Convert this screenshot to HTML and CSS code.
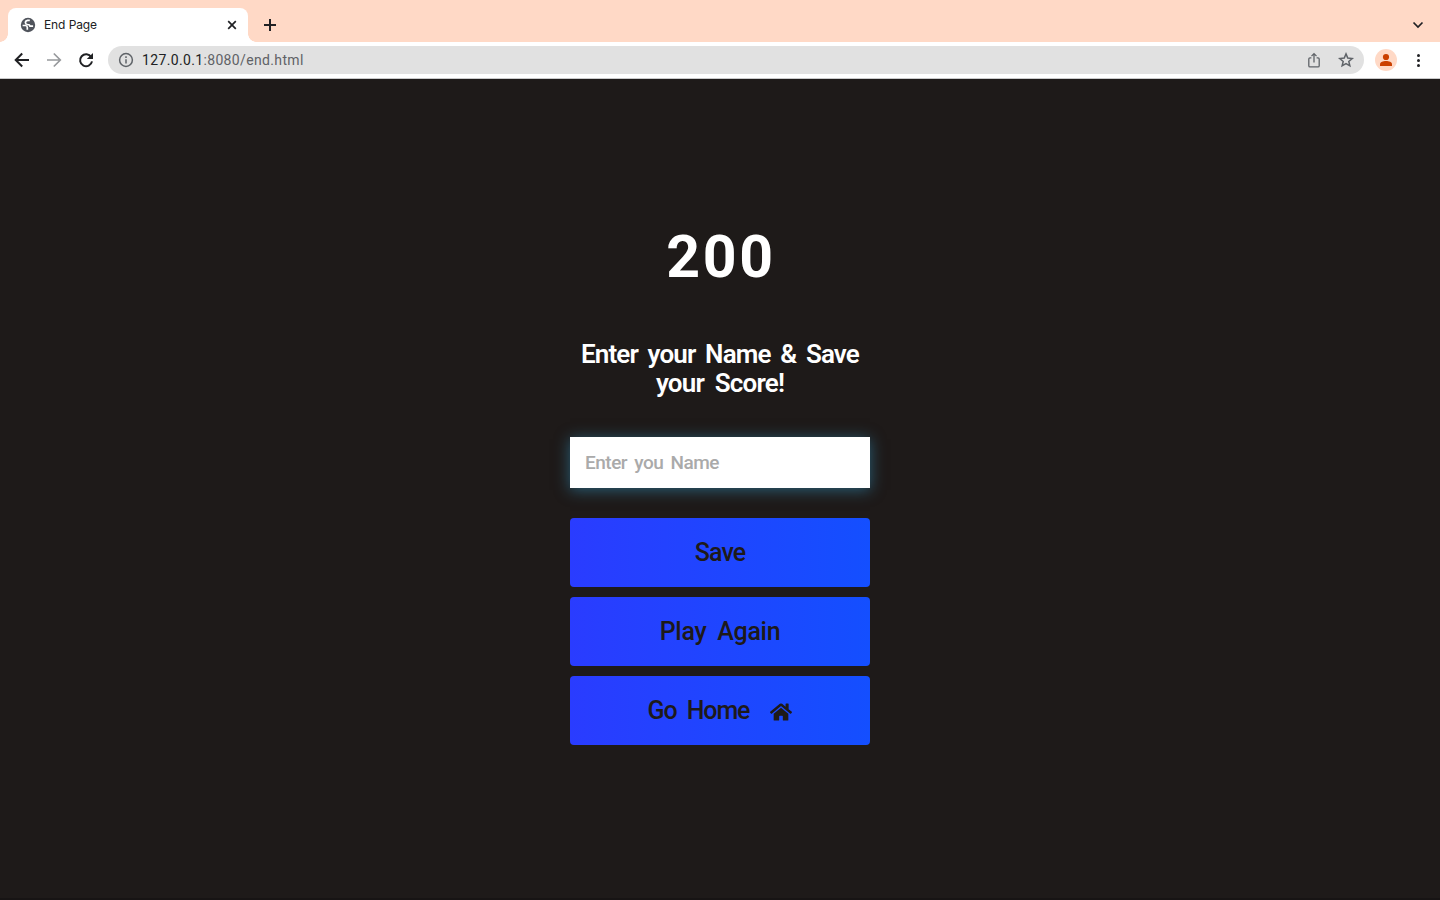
FILE: index.html
```html
<!DOCTYPE html>
<html lang="en">
<head>
<meta charset="utf-8">
<title>End Page</title>
<link rel="stylesheet" href="styles.css">
</head>
<body>
<header class="browser">
  <div class="tabs">
    <div class="tab">
      <svg class="globe" viewBox="0 0 16 16"><circle cx="8" cy="8" r="7.200" fill="#50545c"/><path d="M9.800 3.300H7.600Q5.400 3.700 5.400 5.700 5.500 7.300 7.500 7.500 9.800 7.500 10 9.200H13.100M2.600 8.500H5.300Q7.200 8.600 7.300 10.200V12.800" fill="none" stroke="#fff" stroke-width="1.700"/></svg>
      <span class="tab-title">End Page</span>
      <svg class="close" viewBox="0 0 10 10"><path d="M1.200 1.200l7.600 7.600M8.800 1.200L1.200 8.800" class="stroke"/></svg>
    </div>
    <svg class="plus" viewBox="0 0 12 12"><path d="M6 0v12M0 6h12" class="stroke thick"/></svg>
    <svg class="chevron" viewBox="0 0 12 8"><path d="M1.500 1.500L6 6l4.500-4.500" class="stroke"/></svg>
  </div>
  <div class="toolbar">
    <svg class="nav" viewBox="0 0 16 16"><path d="M15 8H2M8.200 1.500L1.700 8l6.500 6.500" class="stroke thick"/></svg>
    <svg class="nav muted" viewBox="0 0 16 16"><path d="M1 8h13M7.800 1.500L14.300 8l-6.500 6.500" class="stroke"/></svg>
    <svg class="nav" viewBox="0 0 16 16"><path d="M13.200 5.100A6 6 0 1 0 14 9.400" class="stroke thick"/><path d="M15 .9v6.200H8.800z" fill="#202124"/></svg>
    <div class="address">
      <svg class="info" viewBox="0 0 16 16"><circle cx="8" cy="8" r="6.400" class="line"/><path d="M8 7.200v4.300M8 4.300v1.600" class="line"/></svg>
      <span class="url"><b>127.0.0.1</b>:8080/end.html</span>
      <svg class="share" viewBox="0 0 16 16"><path d="M5.400 5.800H4q-1.200 0-1.200 1.200v6.700q0 1.200 1.200 1.200h8q1.200 0 1.200-1.200V7q0-1.200-1.200-1.200h-1.400M8 10.500V1.600M5.500 4.100L8 1.600l2.500 2.500" class="line thin"/></svg>
      <svg class="star" viewBox="0 0 16 16"><path d="M8 1.900l1.750 4.200 4.450.4-3.400 2.900 1.050 4.400L8 11.500l-3.850 2.300L5.200 9.400 1.800 6.500l4.450-.4z" class="line"/></svg>
    </div>
    <div class="avatar"><svg viewBox="0 0 22 22"><circle cx="11" cy="8" r="3.100"/><path d="M5 17v-1.800c0-2 3-3.200 6-3.200s6 1.200 6 3.200V17z"/></svg></div>
    <div class="menu"><i></i><i></i><i></i></div>
  </div>
</header>
<main class="page">
  <div class="content">
    <h1 class="score">200</h1>
    <form class="form">
      <h2 class="prompt"><span class="line-one">Enter your Name &amp; Save</span><br><span class="line-two">your Score!</span></h2>
      <input class="name" type="text" placeholder="Enter you Name">
      <button class="btn" type="button"><span class="save">Save</span></button>
    </form>
    <a class="btn"><span class="again">Play Again</span></a>
    <a class="btn"><span class="go">Go Home</span><svg class="home" viewBox="0 0 576 512"><path d="M280.370 148.260L96 300.110V464a16 16 0 0 0 16 16l112.060-.29a16 16 0 0 0 15.920-16V368a16 16 0 0 1 16-16h64a16 16 0 0 1 16 16v95.640a16 16 0 0 0 16 16.050L464 480a16 16 0 0 0 16-16V300L295.670 148.260a12.190 12.190 0 0 0-15.300 0zM571.600 251.470L488 182.560V44.050a12 12 0 0 0-12-12h-56a12 12 0 0 0-12 12v72.610L318.470 43a48 48 0 0 0-61 0L4.340 251.470a12 12 0 0 0-1.600 16.900l25.500 31A12 12 0 0 0 45.150 301l235.220-193.740a12.190 12.190 0 0 1 15.300 0L530.900 301a12 12 0 0 0 16.900-1.600l25.500-31a12 12 0 0 0-1.700-16.930z"/></svg></a>
  </div>
</main>
</body>
</html>
```
FILE: styles.css
```css
* { box-sizing: border-box; }
body { margin: 0; height: 900px; overflow: hidden; display: flex; flex-direction: column; background: #1e1a19; font-family: Roboto, sans-serif; }
svg { display: block; flex: none; overflow: visible; }
.stroke { fill: none; stroke: #202124; stroke-width: 1.7; }
.stroke.thick { stroke-width: 2; }
.muted .stroke { stroke: #97999c; }
.line { fill: none; stroke: #5f6368; stroke-width: 1.5; }
.line.thin { stroke-width: 1.3; }
.browser { height: 79px; flex: none; background: #fff; border-bottom: 1px solid #c9c9ca; }
.tabs { height: 42px; display: flex; align-items: flex-end; padding-left: 8px; background: #ffd9c6; }
.tab { position: relative; width: 240px; height: 34px; display: flex; align-items: center; padding: 0 11px 0 12px; border-radius: 8px 8px 0 0; background: #fff; }
.tab::before, .tab::after { content: ""; position: absolute; bottom: 0; width: 8px; height: 8px; }
.tab::before { left: -8px; background: radial-gradient(circle at 0 0, transparent 7.5px, #fff 8px); }
.tab::after { right: -8px; background: radial-gradient(circle at 100% 0, transparent 7.5px, #fff 8px); }
.globe { width: 16px; height: 16px; }
.tab-title { flex: 1; margin-left: 8px; padding-bottom: 2px; font: 12px Inter, sans-serif; letter-spacing: -.1px; color: #202124; }
.close { width: 10px; height: 10px; }
.plus { width: 12px; height: 12px; margin: 0 0 11px 16px; }
.chevron { width: 12px; height: 8px; margin: 0 16px 13px auto; }
.toolbar { height: 36px; display: flex; align-items: center; padding: 0 15px 0 14px; }
.nav { width: 16px; height: 16px; margin-right: 16px; }
.nav + .nav + .nav { margin-right: 14px; }
.address { flex: 1; height: 28px; display: flex; align-items: center; padding: 0 10px; border-radius: 14px; background: #e1e1e1; }
.info { width: 16px; height: 16px; }
.url { flex: 1; margin-left: 8px; font-size: 14px; letter-spacing: .35px; color: #606266; }
.url b { font-weight: 400; color: #202124; }
.share { width: 16px; height: 16px; margin-right: 16px; }
.star { width: 16px; height: 16px; }
.avatar { width: 22px; height: 22px; margin-left: 11px; border-radius: 50%; background: #ffd9c6; fill: #cb4000; }
.menu { width: 13px; margin-left: 15px; display: flex; flex-direction: column; align-items: center; gap: 2px; }
.menu i { width: 3px; height: 3px; border-radius: 50%; background: #202124; }
.page { flex: 1; display: flex; justify-content: center; border-bottom: 2px solid #171414; }
.content { width: 300px; padding-top: 142px; }
.score { margin: 0; height: 72px; font-size: 59px; line-height: 72px; font-weight: 700; letter-spacing: 2.6px; text-align: center; text-indent: 2px; color: #fff; }
.form { margin-top: 47px; }
.prompt { margin: 0 0 39px; font-size: 26px; line-height: 29px; font-weight: 600; text-align: center; white-space: nowrap; color: #fff; }
.line-one { letter-spacing: -.85px; word-spacing: 4px; }
.line-two { letter-spacing: -.8px; word-spacing: 5px; }
.name { display: block; width: 300px; height: 51px; margin: 0 0 30px; padding: 0 15px; border: 0; outline: 0; background: #fff; box-shadow: 0 2px 14px rgba(53,163,214,.5); font: 500 19px Roboto, sans-serif; letter-spacing: -.5px; word-spacing: 3px; }
.name::placeholder { color: #aaa; opacity: 1; }
.btn { width: 300px; height: 69px; margin-bottom: 10px; padding: 0; border: 0; border-radius: 4px; display: flex; align-items: center; justify-content: center; background: linear-gradient(90deg, #2a3cff, #144fff); color: #1e1a19; font: 500 25px/30px Roboto, sans-serif; }
.save { letter-spacing: -.9px; }
.again { letter-spacing: -.3px; word-spacing: 5px; }
.go { letter-spacing: -1.1px; word-spacing: 5px; }
.home { width: 22px; height: 20px; margin: 2px 0 0 21px; fill: #1e1a19; }
```
